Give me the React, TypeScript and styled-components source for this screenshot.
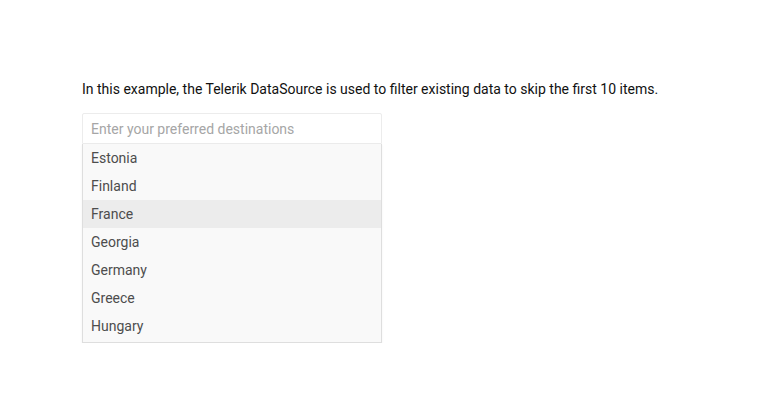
import styled, { createGlobalStyle } from "styled-components";

const GlobalStyle = createGlobalStyle`
  html, body {
    margin: 0;
    padding: 0;
    background: #ffffff;
  }
  body {
    font-family: Roboto, "Liberation Sans", Arial, sans-serif;
    color: #000000;
  }
`;

const Page = styled.div`
  padding: 79px 0 0 82px;
`;

const Intro = styled.p`
  margin: 0 0 14px;
  font-size: 14px;
  line-height: 20px;
  color: #111111;
`;

const Combo = styled.div`
  width: 300px;
`;

const Input = styled.input`
  box-sizing: border-box;
  display: block;
  width: 100%;
  height: 31px;
  margin: 0;
  padding: 0 8px;
  border: 1px solid #ececec;
  border-radius: 2px 2px 0 0;
  background: #ffffff;
  font-family: inherit;
  font-size: 14px;
  color: #333333;
  outline: none;

  &::placeholder {
    color: #a6a6a6;
  }
`;

const List = styled.ul`
  box-sizing: border-box;
  list-style: none;
  margin: 0;
  padding: 0 0 2px;
  border: 1px solid #dedede;
  border-top: none;
  background: #f9f9f9;
  box-shadow: 0 1px 2px rgba(0, 0, 0, 0.06);
`;

const Item = styled.li<{ $active?: boolean }>`
  height: 28px;
  line-height: 28px;
  padding: 0 8px;
  font-size: 14px;
  color: #4d4d4d;
  background: ${(p) => (p.$active ? "#ececec" : "transparent")};
  cursor: default;
`;

const countries = [
  "Estonia",
  "Finland",
  "France",
  "Georgia",
  "Germany",
  "Greece",
  "Hungary",
];

export default function App() {
  return (
    <>
      <GlobalStyle />
      <Page>
        <Intro>
          In this example, the Telerik DataSource is used to filter existing
          data to skip the first 10 items.
        </Intro>
        <Combo>
          <Input placeholder="Enter your preferred destinations" />
          <List>
            {countries.map((c) => (
              <Item key={c} $active={c === "France"}>
                {c}
              </Item>
            ))}
          </List>
        </Combo>
      </Page>
    </>
  );
}
